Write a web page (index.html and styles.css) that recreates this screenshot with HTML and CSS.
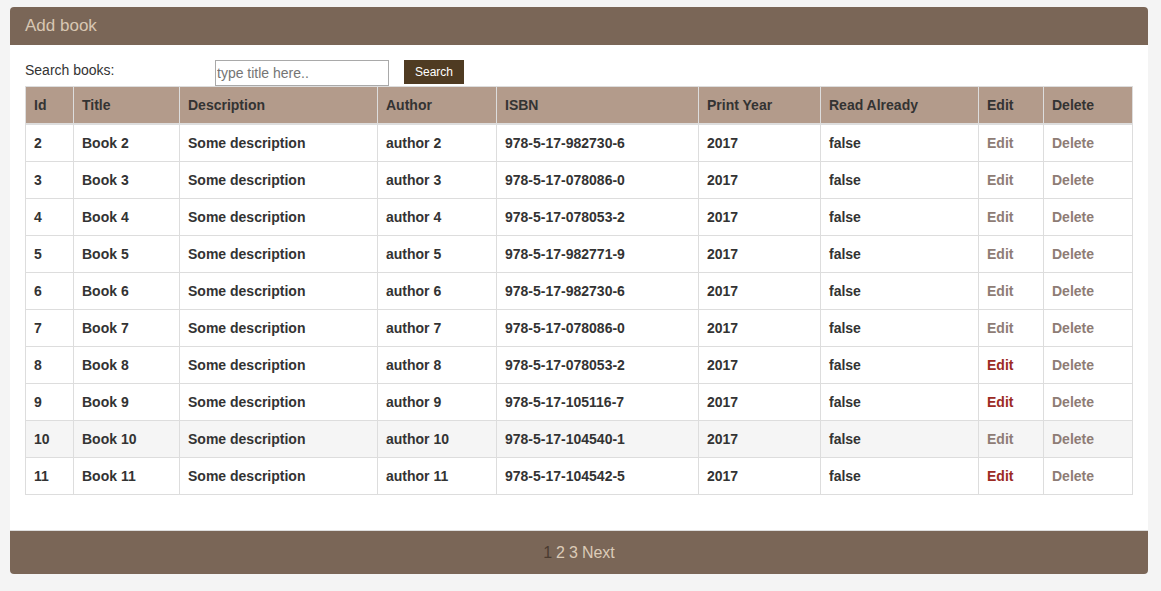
FILE: index.html
```html
<!DOCTYPE html>
<html>
<head>
<meta charset="utf-8">
<title>Books</title>
<link rel="stylesheet" href="styles.css">
</head>
<body>
<div class="panel">
  <div class="panel-heading">Add book</div>
  <div class="panel-body">
    <div class="search-row">
      <span class="search-label">Search books:</span>
      <input class="search-input" type="text" placeholder="type title here..">
      <button class="search-btn">Search</button>
    </div>
    <table class="books">
      <colgroup>
        <col class="c-id"><col class="c-title"><col class="c-desc"><col class="c-author"><col class="c-isbn"><col class="c-year"><col class="c-read"><col class="c-edit"><col class="c-del">
      </colgroup>
      <thead>
        <tr><th>Id</th><th>Title</th><th>Description</th><th>Author</th><th>ISBN</th><th>Print Year</th><th>Read Already</th><th>Edit</th><th>Delete</th></tr>
      </thead>
      <tbody>
        <tr><td>2</td><td>Book 2</td><td>Some description</td><td>author 2</td><td>978-5-17-982730-6</td><td>2017</td><td>false</td><td><a class="lnk">Edit</a></td><td><a class="lnk">Delete</a></td></tr>
        <tr><td>3</td><td>Book 3</td><td>Some description</td><td>author 3</td><td>978-5-17-078086-0</td><td>2017</td><td>false</td><td><a class="lnk">Edit</a></td><td><a class="lnk">Delete</a></td></tr>
        <tr><td>4</td><td>Book 4</td><td>Some description</td><td>author 4</td><td>978-5-17-078053-2</td><td>2017</td><td>false</td><td><a class="lnk">Edit</a></td><td><a class="lnk">Delete</a></td></tr>
        <tr><td>5</td><td>Book 5</td><td>Some description</td><td>author 5</td><td>978-5-17-982771-9</td><td>2017</td><td>false</td><td><a class="lnk">Edit</a></td><td><a class="lnk">Delete</a></td></tr>
        <tr><td>6</td><td>Book 6</td><td>Some description</td><td>author 6</td><td>978-5-17-982730-6</td><td>2017</td><td>false</td><td><a class="lnk">Edit</a></td><td><a class="lnk">Delete</a></td></tr>
        <tr><td>7</td><td>Book 7</td><td>Some description</td><td>author 7</td><td>978-5-17-078086-0</td><td>2017</td><td>false</td><td><a class="lnk">Edit</a></td><td><a class="lnk">Delete</a></td></tr>
        <tr><td>8</td><td>Book 8</td><td>Some description</td><td>author 8</td><td>978-5-17-078053-2</td><td>2017</td><td>false</td><td><a class="lnk visited">Edit</a></td><td><a class="lnk">Delete</a></td></tr>
        <tr><td>9</td><td>Book 9</td><td>Some description</td><td>author 9</td><td>978-5-17-105116-7</td><td>2017</td><td>false</td><td><a class="lnk visited">Edit</a></td><td><a class="lnk">Delete</a></td></tr>
        <tr class="hover"><td>10</td><td>Book 10</td><td>Some description</td><td>author 10</td><td>978-5-17-104540-1</td><td>2017</td><td>false</td><td><a class="lnk">Edit</a></td><td><a class="lnk">Delete</a></td></tr>
        <tr><td>11</td><td>Book 11</td><td>Some description</td><td>author 11</td><td>978-5-17-104542-5</td><td>2017</td><td>false</td><td><a class="lnk visited">Edit</a></td><td><a class="lnk">Delete</a></td></tr>
      </tbody>
    </table>
  </div>
  <div class="panel-footer">
    <span class="page current">1</span>
    <span class="page">2</span>
    <span class="page">3</span>
    <span class="page">Next</span>
  </div>
</div>
</body>
</html>
```

FILE: styles.css
```css
html, body {
  margin: 0;
  padding: 0;
}
body {
  background: #f4f4f4;
  font-family: "Liberation Sans", Arial, sans-serif;
  font-size: 14px;
  color: #333;
  padding-top: 7px;
}
.panel {
  margin-left: 10px;
  width: 1138px;
  background: #fff;
  border-radius: 4px;
}
.panel-heading {
  background: #7a6657;
  color: #d8c6b2;
  font-size: 17px;
  line-height: 18px;
  padding: 10px 15px;
  border-radius: 4px 4px 0 0;
}
.panel-body {
  padding: 15px 15px 35px 15px;
}
.search-row {
  display: flex;
  align-items: flex-start;
  height: 26px;
}
.search-label {
  width: 190px;
  line-height: 20px;
}
.search-input {
  box-sizing: border-box;
  width: 174px;
  height: 26px;
  margin: 0;
  border: 1px solid #a9a9a9;
  padding: 0 1px;
  font-family: "Liberation Sans", Arial, sans-serif;
  font-size: 14px;
  color: #333;
}
.search-input::placeholder {
  color: #757575;
}
.search-btn {
  margin: 0 0 0 15px;
  width: 60px;
  height: 24px;
  border: 0;
  padding: 0;
  background: #4f3b22;
  color: #fff;
  font-family: "Liberation Sans", Arial, sans-serif;
  font-size: 12px;
}
.books {
  width: 1107px;
  border-collapse: collapse;
  table-layout: fixed;
  border: 1px solid #ddd;
}
.c-id { width: 48px; }
.c-title { width: 106px; }
.c-desc { width: 198px; }
.c-author { width: 119px; }
.c-isbn { width: 202px; }
.c-year { width: 122px; }
.c-read { width: 158px; }
.c-edit { width: 65px; }
.c-del { width: 89px; }
.books th, .books td {
  text-align: left;
  padding: 8px;
  line-height: 20px;
  font-weight: bold;
  border: 1px solid #ddd;
  white-space: nowrap;
}
.books th {
  background: #b39b8b;
  color: #333;
  border-bottom: 2px solid #ddd;
}
.books tr.hover td {
  background: #f5f5f5;
}
.lnk {
  color: #8e7c75;
  text-decoration: none;
}
.lnk.visited {
  color: #9c2b23;
}
.panel-footer {
  background: #7a6657;
  border-top: 1px solid #ddd;
  border-radius: 0 0 4px 4px;
  height: 43px;
  display: flex;
  align-items: center;
  justify-content: center;
  gap: 4px;
  font-size: 16px;
  color: #dccbb8;
}
.page.current {
  color: #4a3b30;
}
```
